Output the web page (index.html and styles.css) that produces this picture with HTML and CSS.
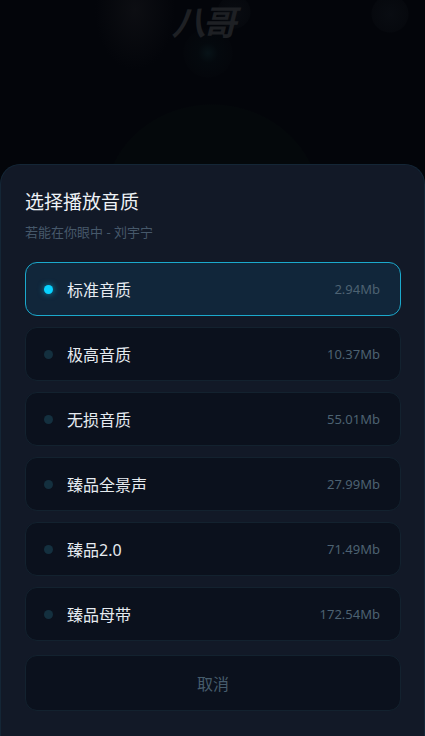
FILE: index.html
```html
<!DOCTYPE html>
<html lang="zh-CN">
<head>
    <meta charset="UTF-8">
    <meta name="viewport" content="width=device-width, initial-scale=1.0">
    <title>选择播放音质</title>
    <link rel="stylesheet" href="styles.css">
</head>
<body>
    <div class="backdrop">
        <span class="backdrop-text">八哥</span>
    </div>

    <div class="sheet">
        <h2 class="sheet-title">选择播放音质</h2>
        <p class="sheet-subtitle">若能在你眼中 - 刘宇宁</p>

        <div class="quality-list">
            <div class="quality-item active">
                <span class="dot"></span>
                <span class="name">标准音质</span>
                <span class="size">2.94Mb</span>
            </div>
            <div class="quality-item">
                <span class="dot"></span>
                <span class="name">极高音质</span>
                <span class="size">10.37Mb</span>
            </div>
            <div class="quality-item">
                <span class="dot"></span>
                <span class="name">无损音质</span>
                <span class="size">55.01Mb</span>
            </div>
            <div class="quality-item">
                <span class="dot"></span>
                <span class="name">臻品全景声</span>
                <span class="size">27.99Mb</span>
            </div>
            <div class="quality-item">
                <span class="dot"></span>
                <span class="name">臻品2.0</span>
                <span class="size">71.49Mb</span>
            </div>
            <div class="quality-item">
                <span class="dot"></span>
                <span class="name">臻品母带</span>
                <span class="size">172.54Mb</span>
            </div>
        </div>

        <button class="cancel-button">取消</button>
    </div>
</body>
</html>
```

FILE: styles.css
```css
* {
    box-sizing: border-box;
}
body {
    margin: 0;
    width: 425px;
    height: 736px;
    overflow: hidden;
    background-color: #03050a;
    font-family: "Noto Sans", "Noto Sans CJK SC", sans-serif;
    color: #e8edf2;
}

/* dimmed player behind the sheet */
.backdrop {
    height: 164px;
    overflow: hidden;
    background:
        radial-gradient(circle at 208px 53px, rgba(16, 44, 48, 0.35) 0, rgba(8, 20, 24, 0.25) 10px, rgba(8, 12, 16, 0.2) 24px, transparent 25px),
        radial-gradient(circle at 234px 12px, rgba(16, 20, 26, 0.45) 0, rgba(10, 13, 18, 0.4) 16px, transparent 17px),
        radial-gradient(circle at 390px 14px, rgba(14, 18, 24, 0.55) 0, rgba(10, 13, 18, 0.45) 18px, transparent 19px),
        radial-gradient(ellipse 108px 100px at 212px 204px, #04080b 0, #04080b 99%, transparent 100%),
        radial-gradient(ellipse 40px 60px at 135px 10px, rgba(30, 30, 34, 0.35) 0, transparent 100%),
        #03050a;
    display: flex;
    justify-content: center;
}
.backdrop-text {
    margin: 2px 0 0 -20px;
    padding: 0 8px;
    font-size: 34px;
    line-height: 40px;
    height: 42px;
    font-weight: 700;
    font-style: italic;
    color: #1e2024;
    letter-spacing: -3px;
}

.sheet {
    height: 572px;
    padding: 25px 23px 0 24px;
    background-color: #121927;
    border: 1px solid #142636;
    border-bottom: none;
    border-radius: 20px 20px 0 0;
}
.sheet-title {
    margin: 0;
    font-size: 19px;
    line-height: 24px;
    font-weight: 400;
    color: #eef2f6;
}
.sheet-subtitle {
    margin: 8px 0 0;
    font-size: 13px;
    line-height: 20px;
    color: #46586a;
}

.quality-list {
    margin-top: 20px;
    display: flex;
    flex-direction: column;
    gap: 11px;
}
.quality-item {
    height: 54px;
    display: flex;
    align-items: center;
    padding: 0 20px 0 18px;
    background-color: #0b111d;
    border: 1px solid #13222f;
    border-radius: 12px;
}
.dot {
    width: 9px;
    height: 9px;
    border-radius: 50%;
    background-color: #14303f;
}
.name {
    margin-left: 14px;
    font-size: 16px;
    color: #e6ebf0;
}
.size {
    margin-left: auto;
    font-size: 13px;
    color: #4d6272;
}

.quality-item.active {
    background-color: #11263a;
    border-color: #1ba9cc;
}
.quality-item.active .dot {
    background-color: #08d2ff;
    box-shadow: 0 0 6px rgba(8, 210, 255, 0.6);
}

.cancel-button {
    width: 100%;
    height: 56px;
    margin-top: 14px;
    background-color: #0b111d;
    border: 1px solid #13222f;
    border-radius: 12px;
    font-family: inherit;
    font-size: 16px;
    color: #465c6c;
    cursor: pointer;
}
```
